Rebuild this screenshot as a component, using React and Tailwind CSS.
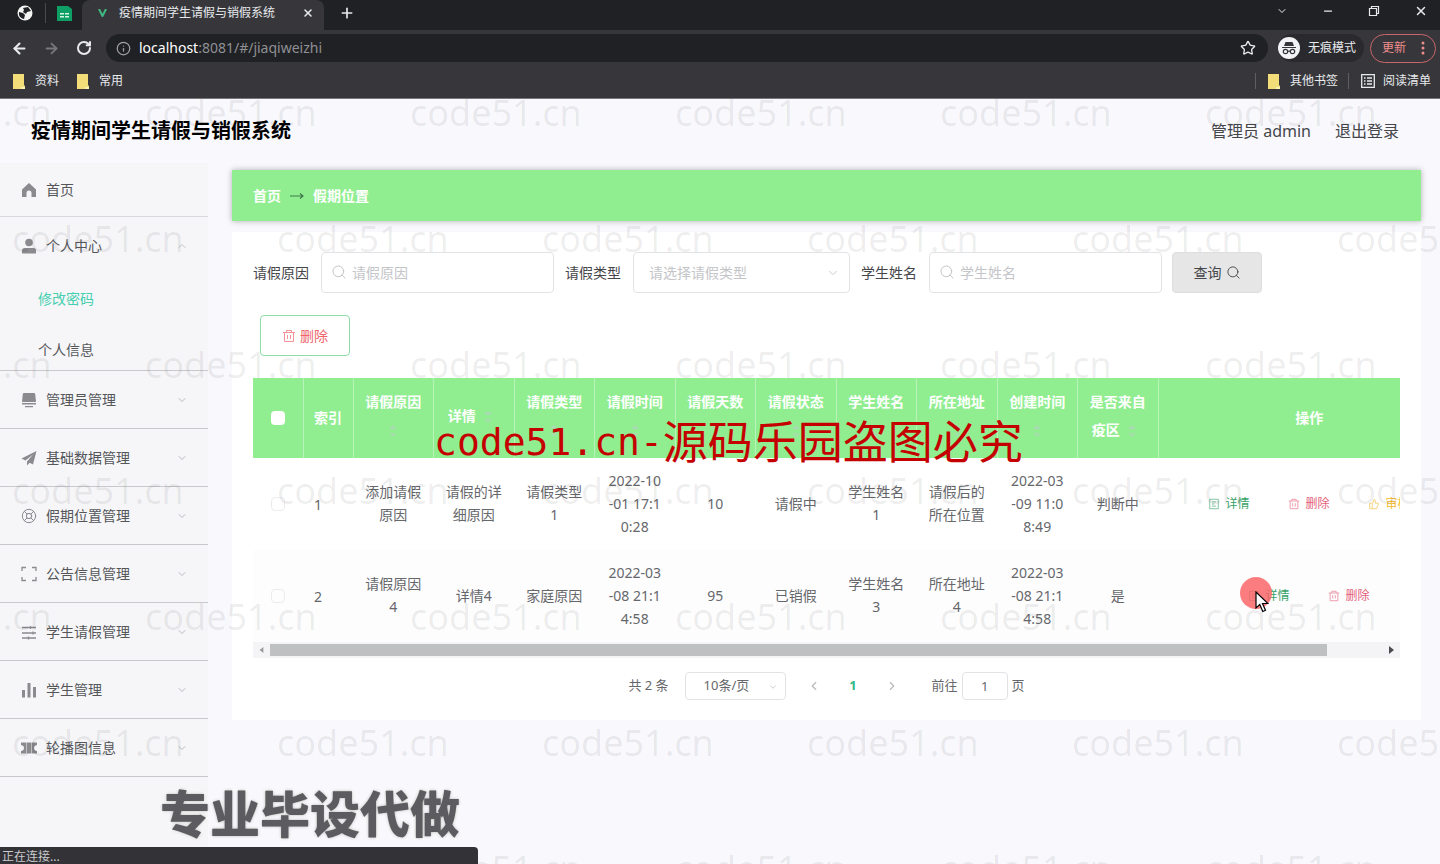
import { useState } from 'react';
import {
  ArrowLeft,
  ArrowRight,
  ChevronDown,
  ChevronLeft,
  ChevronRight,
  ChevronUp,
  Info,
  LifeBuoy,
  Minus,
  Plus,
  RotateCw,
  Search,
  Star,
  X,
} from 'lucide-react';

const menuItems = [
  { label: '管理员管理', icon: 'display' },
  { label: '基础数据管理', icon: 'plane' },
  { label: '假期位置管理', icon: 'buoy' },
  { label: '公告信息管理', icon: 'corners' },
  { label: '学生请假管理', icon: 'sliders' },
  { label: '学生管理', icon: 'bars' },
  { label: '轮播图信息', icon: 'ticket' },
];

const columns = [
  '请假原因',
  '详情',
  '请假类型',
  '请假时间',
  '请假天数',
  '请假状态',
  '学生姓名',
  '所在地址',
  '创建时间',
  '是否来自疫区',
];

const rows = [
  {
    id: 1,
    cells: ['添加请假原因', '请假的详细原因', '请假类型\n1', '2022-10\n-01 17:1\n0:28', '10', '请假中', '学生姓名\n1', '请假后的所在位置', '2022-03\n-09 11:0\n8:49', '判断中'],
    actions: ['detail', 'remove', 'audit'],
  },
  {
    id: 2,
    cells: ['请假原因\n4', '详情4', '家庭原因', '2022-03\n-08 21:1\n4:58', '95', '已销假', '学生姓名\n3', '所在地址\n4', '2022-03\n-08 21:1\n4:58', '是'],
    actions: ['detail', 'remove'],
  },
];

const TrashIcon = ({ className }) => (
  <svg className={className} viewBox="0 0 14 14" fill="none" stroke="currentColor" strokeWidth="1">
    <path d="M1 3.5h12M4.5 3.5v-2h5v2M2.5 3.5v9h9v-9M5.5 6v4M8.5 6v4" />
  </svg>
);

const DocIcon = ({ className }) => (
  <svg className={className} viewBox="0 0 14 14" fill="none" stroke="currentColor" strokeWidth="1">
    <path d="M2 1.5h10v11H2zM4.5 4.5h5M4.5 7h3M4.5 9.5h5" />
  </svg>
);

const AuditIcon = ({ className }) => (
  <svg className={className} viewBox="0 0 14 14" fill="none" stroke="currentColor" strokeWidth="1">
    <path d="M2 6.5v6h8l2-5V6H8.500V2.500L7 1.500 5.500 6zM5 7v5" />
  </svg>
);

const actionTypes = {
  detail: { label: '详情', className: 'text-[#35a267]', Icon: DocIcon },
  remove: { label: '删除', className: 'text-[#e5607a]', Icon: TrashIcon },
  audit: { label: '审核', className: 'text-[#f2b92c]', Icon: AuditIcon },
};

const MenuIcon = ({ name }) => {
  if (name === 'buoy') return <LifeBuoy className="size-4 text-[#8b8b8f]" strokeWidth={1.500} />;
  return (
    <svg className="size-4 text-[#8b8b8f]" viewBox="0 0 16 16" fill="currentColor">
      {name === 'home' && <path d="M8 1 1 7.500V15h4.500v-4a2.500 2.500 0 0 1 5 0v4H15V7.500z" />}
      {name === 'user' && (
        <>
          <circle cx="8" cy="4.500" r="3.800" />
          <path d="M1 15.500v-3Q1 10 3.500 10h9q2.500 0 2.500 2.500v3z" />
        </>
      )}
      {name === 'display' && <path d="M3 1h10q1 0 1.200 1L15 10H1l.8-8Q2 1 3 1zM1 11h14v1.500H1zM4 14h8v1.200H4z" />}
      {name === 'plane' && <path d="M15.500 1 .5 8.500 4.500 10.500 12 4.500 6 11.500v4l2.600-2.800L12 14.500z" />}
      {name === 'corners' && (
        <path d="M1 5V1.500h4M11 1.500h4V5M15 11v3.500h-4M5 14.500H1V11" fill="none" stroke="currentColor" strokeWidth="1.300" />
      )}
      {name === 'sliders' && (
        <path d="M1 3.500h14M1 9h14M1 14h14M9.500 2v3M12 7.500v3M7.500 12.500v3" fill="none" stroke="currentColor" strokeWidth="1.300" />
      )}
      {name === 'bars' && <path d="M1 8h3v7.500H1zM6.500 1h3v14.500h-3zM12 5h3v10.500h-3z" />}
      {name === 'ticket' && (
        <path
          fillRule="evenodd"
          d="M0 2.500h5v11H0V11q3-.5 3-3T0 5zM5.500 2.500h5v11h-5zM11 2.500h5V5q-3 .5-3 3t3 3v2.500h-5z"
        />
      )}
    </svg>
  );
};

const FolderIcon = () => (
  <svg className="h-[15px] w-3" viewBox="0 0 12 15">
    <path d="M0 0h11v11l1 1v3H0z" fill="#f3dd79" />
    <path d="M8 13h4v2H8z" fill="#fff3b4" />
  </svg>
);

const SortCaret = () => (
  <span className="inline-flex w-6 flex-col items-center gap-1 align-middle">
    <svg className="h-1 w-2" viewBox="0 0 8 4" fill="#a9dcb2">
      <path d="M4 0l4 4H0z" />
    </svg>
    <svg className="h-1 w-2" viewBox="0 0 8 4" fill="#a4dfa9">
      <path d="M0 0h8L4 4z" />
    </svg>
  </span>
);

const BrowserChrome = () => (
  <div className="relative z-20 border-b border-[#77777b] bg-[#37373b] text-xs text-[#e8eaed]">
    <div className="flex h-[30px] items-stretch bg-[#202124]">
      <div className="flex w-[82px] items-center pb-1 pl-[17px]">
        <svg className="size-4" viewBox="0 0 16 16">
          <circle cx="8" cy="8" r="7.500" fill="#f4f4f4" />
          <path d="M2 7l4 1 2 2-1 4q-4-1-5-4zM6 3l5-1 3 4-4 1-1 2-3-2 1-2z" fill="#202124" />
        </svg>
        <span className="ml-3 h-5 w-px bg-[#4a4b4f]" />
        <svg className="ml-[11px] size-[15px]" viewBox="0 0 15 15">
          <path d="M0 0h11l4 3v12H0z" fill="#0e9f64" />
          <path d="M3 7h4v1.500H3zM8 7h4v1.500H8zM3 10h4v1.500H3zM8 10h4v1.500H8z" fill="#d6f5e5" />
        </svg>
      </div>
      <div className="flex w-[242px] items-center rounded-t-lg bg-[#37373b] pr-[10px] pb-1 pl-4">
        <svg className="h-2 w-[9px]" viewBox="0 0 9 8" fill="none">
          <path d="M1 0l3.500 7L8 0" stroke="#41b883" strokeWidth="2" />
        </svg>
        <span className="ml-3 flex-1 whitespace-nowrap">疫情期间学生请假与销假系统</span>
        <button type="button" aria-label="关闭标签页">
          <X className="size-3" strokeWidth={3} />
        </button>
      </div>
      <button type="button" aria-label="新标签页" className="ml-[15px] pb-1">
        <Plus className="size-4" strokeWidth={2.500} />
      </button>
      <div className="ml-auto flex items-center gap-[34px] pr-3 pb-2">
        <ChevronDown className="size-3" strokeWidth={2} />
        <Minus className="size-3" strokeWidth={2.500} />
        <svg className="size-3" viewBox="0 0 12 12" fill="none" stroke="currentColor" strokeWidth="1.200">
          <path d="M1.500 3.500h7v7h-7zM3.500 3.500v-2h7v7h-2" />
        </svg>
        <X className="size-3.5" strokeWidth={2.500} />
      </div>
    </div>

    <div className="flex h-9 items-center pr-1 pl-[11px]">
      <button type="button" aria-label="后退">
        <ArrowLeft className="size-[17px]" strokeWidth={3} />
      </button>
      <button type="button" aria-label="前进" className="ml-[15px] text-[#77787c]">
        <ArrowRight className="size-[17px]" strokeWidth={2.500} />
      </button>
      <button type="button" aria-label="刷新" className="ml-4">
        <RotateCw className="size-4" strokeWidth={3} />
      </button>
      <div className="ml-3.5 flex h-7 flex-1 items-center rounded-full bg-[#202124] pr-3 pl-2.5 text-sm">
        <Info className="size-[15px] text-[#a0a1a5]" strokeWidth={2} />
        <span className="ml-2 text-white">
          localhost<span className="text-[#8f9094]">:8081/#/jiaqiweizhi</span>
        </span>
        <Star className="ml-auto size-4" strokeWidth={2} />
      </div>
      <div className="ml-2.5 flex h-7 items-center rounded-full bg-[#2a2a2e] pr-2">
        <svg className="size-[22px]" viewBox="0 0 22 22">
          <circle cx="11" cy="11" r="11" fill="#f1f3f4" />
          <path d="M7.500 5h7l1.500 4H6zM4 10h14v1H4z" fill="#35363a" />
          <g fill="none" stroke="#35363a" strokeWidth="1.200">
            <circle cx="7.500" cy="14.500" r="2.200" />
            <circle cx="14.500" cy="14.500" r="2.200" />
            <path d="M9.700 14.200h2.600" />
          </g>
        </svg>
        <span className="ml-2">无痕模式</span>
      </div>
      <button type="button" className="ml-1.5 flex h-[29px] w-[66px] items-center justify-between rounded-full border border-[#c9656b] pr-2.5 pl-[11px] text-[#f08c8c]">
        更新
        <svg className="h-3.5 w-1" viewBox="0 0 4 14" fill="currentColor">
          <circle cx="2" cy="2" r="1.500" />
          <circle cx="2" cy="7" r="1.500" />
          <circle cx="2" cy="12" r="1.500" />
        </svg>
      </button>
    </div>

    <div className="flex h-8 items-center pr-[9px] pb-0.5 pl-[13px]">
      <FolderIcon />
      <span className="ml-2.5">资料</span>
      <span className="ml-[18px] flex">
        <FolderIcon />
      </span>
      <span className="ml-2.5">常用</span>
      <span className="ml-auto h-4 w-px bg-[#5f6064]" />
      <span className="ml-3 flex">
        <FolderIcon />
      </span>
      <span className="ml-2.5">其他书签</span>
      <span className="ml-2.5 h-4 w-px bg-[#5f6064]" />
      <svg className="ml-3 size-3.5" viewBox="0 0 14 14" fill="none" stroke="currentColor" strokeWidth="1.300">
        <path d="M.7.7h12.600v12.600H.7zM3 4h1.500M6 4h5M3 7h1.500M6 7h5M3 10h1.500M6 10h5" />
      </svg>
      <span className="ml-2">阅读清单</span>
    </div>
  </div>
);

const Sidebar = () => (
  <nav className="w-52 shrink-0 bg-[#f6f6f9] text-sm text-[#55565a]">
    <a href="#/" className="flex h-[54px] items-center border-b border-[#d9d9dd] pl-[21px]">
      <MenuIcon name="home" />
      <span className="ml-[9px]">首页</span>
    </a>
    <div className="border-b border-[#c9c9cd]">
      <button type="button" className="flex h-[58px] w-full items-center pr-5 pl-[21px]">
        <MenuIcon name="user" />
        <span className="ml-[9px]">个人中心</span>
        <ChevronUp className="ml-auto size-3 text-[#b0b1b5]" strokeWidth={1.500} />
      </button>
      <div className="flex flex-col gap-[31px] pt-3.5 pb-2.5 pl-[38px] leading-5">
        <a href="#/updatePassword" className="text-[#45cfae]">修改密码</a>
        <a href="#/center">个人信息</a>
      </div>
    </div>
    {menuItems.map((item) => (
      <button
        key={item.label}
        type="button"
        className="flex h-[58px] w-full items-center border-b border-[#c9c9cd] pr-5 pl-[21px]"
      >
        <MenuIcon name={item.icon} />
        <span className="ml-[9px]">{item.label}</span>
        <ChevronDown className="ml-auto size-3 text-[#a6a7ab]" strokeWidth={1.500} />
      </button>
    ))}
  </nav>
);

const SearchForm = () => (
  <form className="flex items-center text-sm text-[#45464a]" onSubmit={(e) => e.preventDefault()}>
    <label htmlFor="reason">请假原因</label>
    <div className="relative ml-3">
      <Search className="absolute top-3 left-2.5 size-4 text-[#c4c5c9]" strokeWidth={1.500} />
      <input
        id="reason"
        placeholder="请假原因"
        className="h-[41px] w-[233px] rounded-sm border border-[#e2e3e6] pl-[30px] placeholder:text-[#c4c5c9]"
      />
    </div>
    <label htmlFor="type" className="ml-[11px]">请假类型</label>
    <div className="relative ml-3">
      <select
        id="type"
        defaultValue=""
        className="h-[41px] w-[217px] appearance-none rounded-sm border border-[#e2e3e6] bg-transparent pl-[15px] text-[#c4c5c9]"
      >
        <option value="">请选择请假类型</option>
      </select>
      <ChevronDown className="absolute top-3.5 right-2.5 size-3.5 text-[#c4c5c9]" strokeWidth={1.500} />
    </div>
    <label htmlFor="student" className="ml-[11px]">学生姓名</label>
    <div className="relative ml-3">
      <Search className="absolute top-3 left-2.5 size-4 text-[#c4c5c9]" strokeWidth={1.500} />
      <input
        id="student"
        placeholder="学生姓名"
        className="h-[41px] w-[233px] rounded-sm border border-[#e2e3e6] pl-[30px] placeholder:text-[#c4c5c9]"
      />
    </div>
    <button type="submit" className="ml-2.5 flex h-[41px] w-[90px] items-center justify-center gap-1 rounded-sm border border-[#dedede] bg-[#e6e6e6]">
      查询
      <Search className="size-[15px]" strokeWidth={1.500} />
    </button>
  </form>
);

const LeaveTable = () => (
  <div className="overflow-hidden">
    <table className="w-full min-w-[1207px] table-fixed border-collapse text-center text-sm">
      <colgroup>
        <col className="w-[50px]" />
        <col className="w-[50px]" />
        {columns.map((name) => (
          <col key={name} />
        ))}
        <col className="w-[302px]" />
      </colgroup>
      <thead className="bg-[#90ee90] leading-7 font-bold text-white">
        <tr className="h-20">
          <th className="border-r border-[#b9f3b9]">
            <input type="checkbox" aria-label="全选" className="mx-auto block size-3.5 appearance-none rounded-sm bg-white" />
          </th>
          <th className="border-r border-[#b9f3b9]">索引</th>
          {columns.map((name) => (
            <th key={name} className="border-r border-[#b9f3b9] px-2.5 pb-1">
              {name}
              <SortCaret />
            </th>
          ))}
          <th>操作</th>
        </tr>
      </thead>
      <tbody className="leading-[23px] text-[#66676b]">
        {rows.map((row) => (
          <tr key={row.id} className="h-[92px] even:bg-[#fdfdfe]">
            <td>
              <input
                type="checkbox"
                aria-label={`选择第${row.id}行`}
                className="mx-auto block size-3.5 appearance-none rounded-sm border border-[#ececf0]"
              />
            </td>
            <td className="pr-5">{row.id}</td>
            {row.cells.map((cell, i) => (
              <td key={i} className="px-2.5 pb-0.5 whitespace-pre-line">
                {cell}
              </td>
            ))}
            <td>
              <div className="flex justify-center text-xs">
                {row.actions.map((name) => {
                  const { label, className, Icon } = actionTypes[name];
                  return (
                    <button key={name} type="button" className={`flex w-20 items-center justify-center gap-[5px] ${className}`}>
                      <Icon className="size-3 opacity-70" />
                      {label}
                    </button>
                  );
                })}
              </div>
            </td>
          </tr>
        ))}
      </tbody>
    </table>
    <div className="flex h-4 items-center bg-[#f4f4f6]">
      <svg className="mx-1.5 h-1.5 w-[5px]" viewBox="0 0 5 8" fill="#9a9a9e">
        <path d="M5 0v8L0 4z" />
      </svg>
      <div className="h-3 flex-1">
        <div className="h-full w-[95%] bg-[#bfc0c2]" />
      </div>
      <svg className="mx-1.5 h-2 w-[5px]" viewBox="0 0 5 8" fill="#4c4c50">
        <path d="M0 0v8l5-4z" />
      </svg>
    </div>
  </div>
);

const Pagination = () => {
  const [page, setPage] = useState('1');

  return (
    <div className="mt-3.5 flex items-center justify-center text-[13px] text-[#66676b]">
      <span>共 2 条</span>
      <div className="relative ml-4">
        <select aria-label="每页条数" className="h-7 w-[101px] appearance-none rounded-sm border border-[#e2e3e6] bg-transparent pl-[18px]">
          <option>10条/页</option>
        </select>
        <ChevronDown className="absolute top-2.5 right-2 size-2.5 text-[#c4c5c9]" strokeWidth={2} />
      </div>
      <button type="button" aria-label="上一页" className="ml-[9px] flex w-[39px] justify-center text-[#b8b9bd]">
        <ChevronLeft className="size-3.5" strokeWidth={2} />
      </button>
      <button type="button" className="w-[39px] font-bold text-[#2fb888]">1</button>
      <button type="button" aria-label="下一页" className="flex w-[39px] justify-center text-[#b8b9bd]">
        <ChevronRight className="size-3.5" strokeWidth={2} />
      </button>
      <label htmlFor="jump" className="ml-5">前往</label>
      <input
        id="jump"
        value={page}
        onChange={(e) => setPage(e.target.value)}
        className="ml-1 h-7 w-[46px] rounded-sm border border-[#e2e3e6] text-center"
      />
      <span className="ml-1">页</span>
    </div>
  );
};

// Repeating site mark, every second row is shifted by half a step
const Watermark = () => (
  <div className="pointer-events-none absolute inset-0 z-10 overflow-hidden text-4xl text-black/7">
    {[0, 1, 2, 3, 4, 5, 6].map((row) => (
      <div key={row} className={row % 2 === 0 ? '-ml-[120px] flex h-[126px]' : 'ml-3 flex h-[126px]'}>
        {[0, 1, 2, 3, 4, 5].map((col) => (
          <span key={col} className="w-[265px] shrink-0 leading-[28px]">
            code51.cn
          </span>
        ))}
      </div>
    ))}
  </div>
);

const App = () => (
  <div className="relative flex h-screen flex-col overflow-hidden bg-[#f8f8fd] font-['Noto_Sans','Noto_Sans_CJK_SC',sans-serif]">
    <BrowserChrome />

    <div className="relative flex min-h-0 flex-1 flex-col">
      <header className="flex h-16 shrink-0 items-center justify-between pr-[41px] pl-[31px]">
        <h1 className="text-xl font-bold text-black">疫情期间学生请假与销假系统</h1>
        <div className="flex gap-6 text-base text-[#45464a]">
          <span>管理员 admin</span>
          <a href="#/login">退出登录</a>
        </div>
      </header>

      <div className="flex flex-1">
        <Sidebar />
        <main className="min-w-0 flex-1 pt-[7px] pr-[19px] pl-6">
          <div className="flex h-[51px] items-center bg-[#90ee90] pl-[21px] text-sm font-bold text-white shadow-[0_0_6px_rgba(0,0,0,0.3)]">
            <a href="#/">首页</a>
            <svg className="mx-[9px] h-2 w-3.5" viewBox="0 0 14 8" fill="none" stroke="#3f7a4a" strokeWidth="1.200">
              <path d="M0 4h13M10 1.500 13 4l-3 2.500" />
            </svg>
            <span>假期位置</span>
          </div>

          <div className="mt-[11px] bg-white px-[21px] pt-5 pb-5">
            <SearchForm />
            <button
              type="button"
              className="mt-[22px] mb-[22px] ml-[7px] flex h-[41px] w-[90px] items-center justify-center gap-1 rounded-sm border border-[#90dca8] text-sm text-[#f0646c]"
            >
              <TrashIcon className="size-3.5 opacity-70" />
              删除
            </button>
            <LeaveTable />
            <Pagination />
          </div>
        </main>
      </div>

      <Watermark />
    </div>

    {/* red site notice over the table */}
    <div className="pointer-events-none absolute top-[410px] left-[434px] z-30 flex items-center text-[45px] leading-[64px] whitespace-nowrap text-[#c40000]">
      <span className="font-['DejaVu_Sans_Mono',monospace] text-[38px]">code51.cn-</span>
      <span>源码乐园盗图必究</span>
    </div>

    {/* slogan */}
    <div className="pointer-events-none absolute bottom-[18px] left-40 z-30 text-[50px] leading-[64px] font-black whitespace-nowrap text-[#5c5c60] [paint-order:stroke_fill] [-webkit-text-stroke:3px_white] [text-shadow:0_0_3px_rgba(0,0,0,0.35)]">
      专业毕设代做
    </div>

    <div className="absolute bottom-0 left-0 z-30 h-[17px] w-[478px] rounded-tr bg-[#333337] pl-0.5 text-xs leading-5 text-[#c9cacd]">
      正在连接...
    </div>

    {/* click highlight and pointer */}
    <div className="pointer-events-none absolute top-[577px] left-[1240px] z-30 size-8 rounded-full bg-[#fb5c60]/80" />
    <svg className="pointer-events-none absolute top-[591px] left-[1255px] z-30 h-[22px] w-3.5" viewBox="0 0 14 22">
      <path d="M1 1v16l3.800-3.500 3 7 2.700-1.200-3-6.800H13z" fill="#fff" stroke="#000" strokeWidth="1.200" />
    </svg>
  </div>
);

export default App;
